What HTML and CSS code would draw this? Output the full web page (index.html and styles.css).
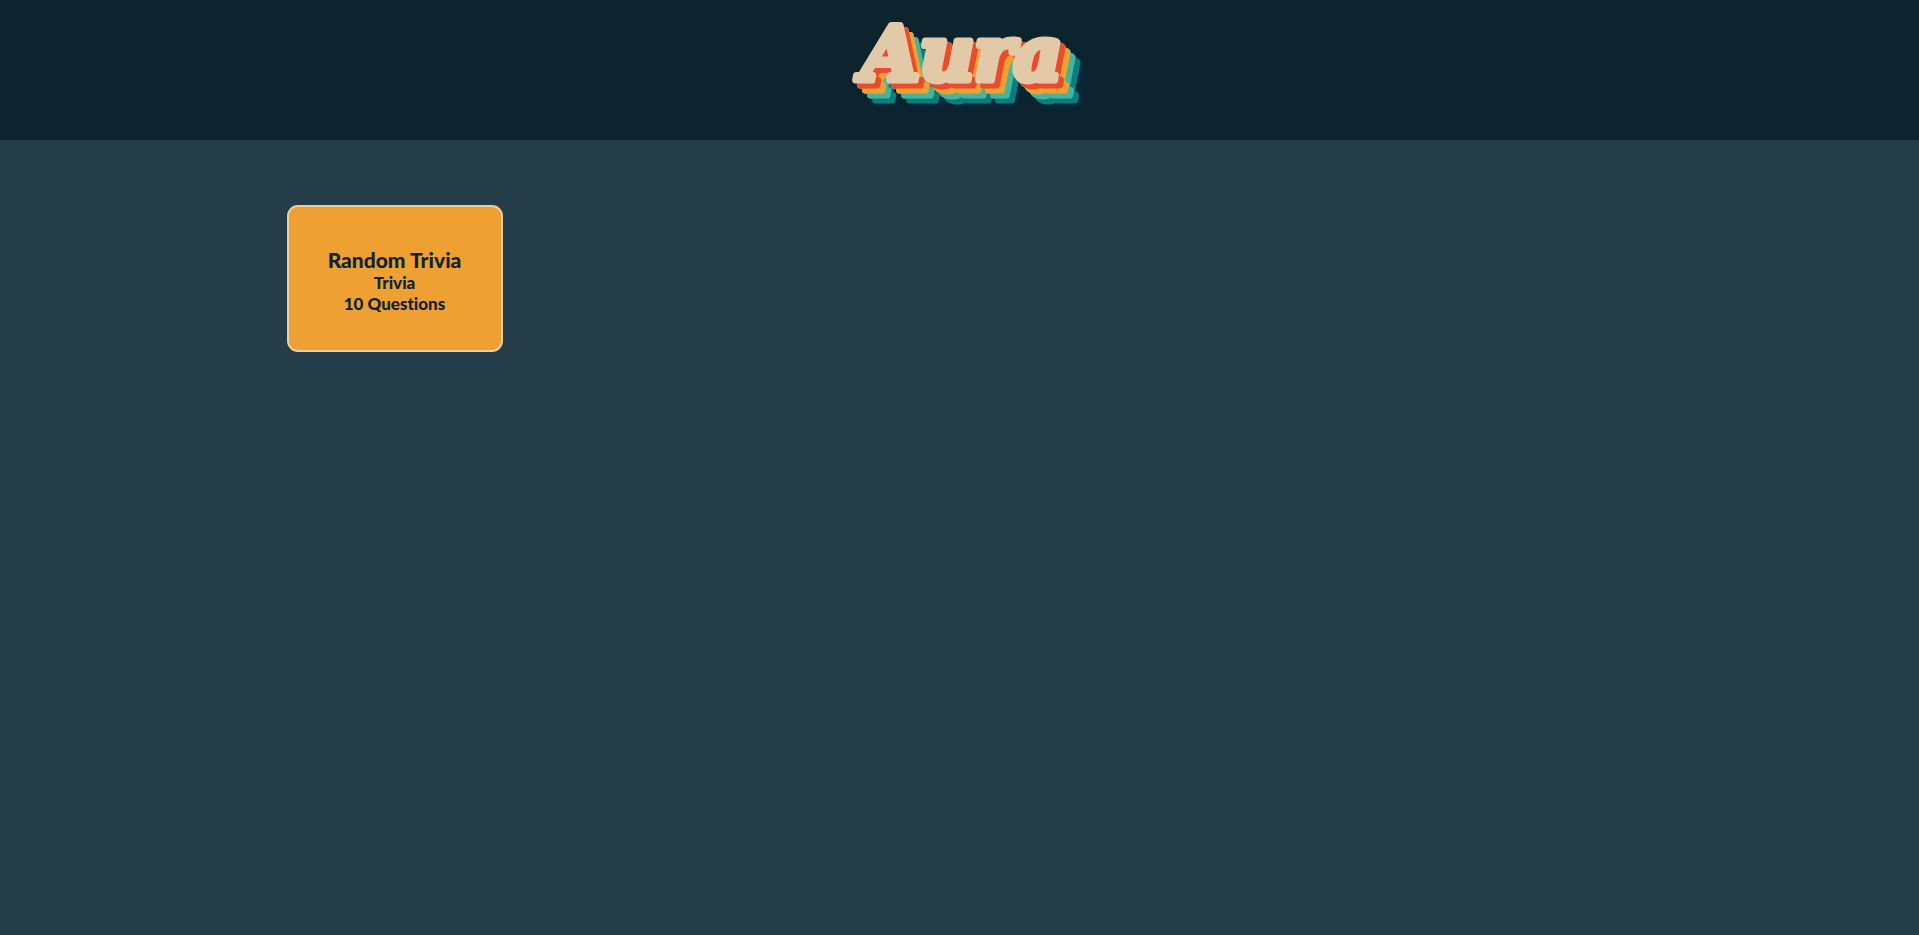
FILE: index.html
```html
<!DOCTYPE html>
<html lang="en">
<head>
<meta charset="utf-8">
<title>Aura</title>
<link rel="stylesheet" href="styles.css">
</head>
<body>
<header class="header">
<h1 class="logo"><svg class="logo-art" viewBox="0 0 260 110"><text class="logo-text" x="132" y="70" text-anchor="middle">Aura</text></svg></h1>
</header>
<main class="quizzes">
<a class="card" href="#random-trivia">
<h2 class="card-title">Random Trivia</h2>
<p class="card-text">Trivia</p>
<p class="card-text">10 Questions</p>
</a>
</main>
</body>
</html>
```

FILE: styles.css
```css
* { box-sizing: border-box; margin: 0; }

body {
  min-height: 100vh;
  background: #253d49;
  color: #0d232d;
  font-family: Lato, "Open Sans", sans-serif;
}

.header {
  display: flex;
  justify-content: center;
  padding: 10px 0 20px;
  background: #0d232d;
}

.logo-art {
  display: block;
  width: 260px;
  height: 110px;
  overflow: visible;
  filter:
    drop-shadow(5px 5px 0 #ec4b2b)
    drop-shadow(5px 5px 0 #eea033)
    drop-shadow(5px 5px 0 #46b39b)
    drop-shadow(5px 5px 0 #048081)
    drop-shadow(5px 5px 2px #04283a);
}

.logo-text {
  fill: #e2caa9;
  stroke: #e2caa9;
  stroke-width: 7px;
  stroke-linejoin: round;
  font: italic 700 75px "DejaVu Serif", serif;
}

.quizzes {
  display: grid;
  grid-template-columns: repeat(auto-fill, 216px);
  gap: 24px;
  max-width: 1346px;
  margin: 0 auto;
  padding: 65px 0;
}

.card {
  display: flex;
  flex-direction: column;
  align-items: center;
  justify-content: center;
  min-height: 147px;
  padding: 20px 16px 16px;
  border: 2px solid #ebcda0;
  border-radius: 11px;
  background: #eea033;
  color: inherit;
  text-align: center;
  text-decoration: none;
}

.card-title {
  font-size: 21px;
  font-weight: 900;
  line-height: 25px;
}

.card-text {
  font-size: 17px;
  font-weight: 900;
  line-height: 21px;
  font-variant-ligatures: none;
}
```
